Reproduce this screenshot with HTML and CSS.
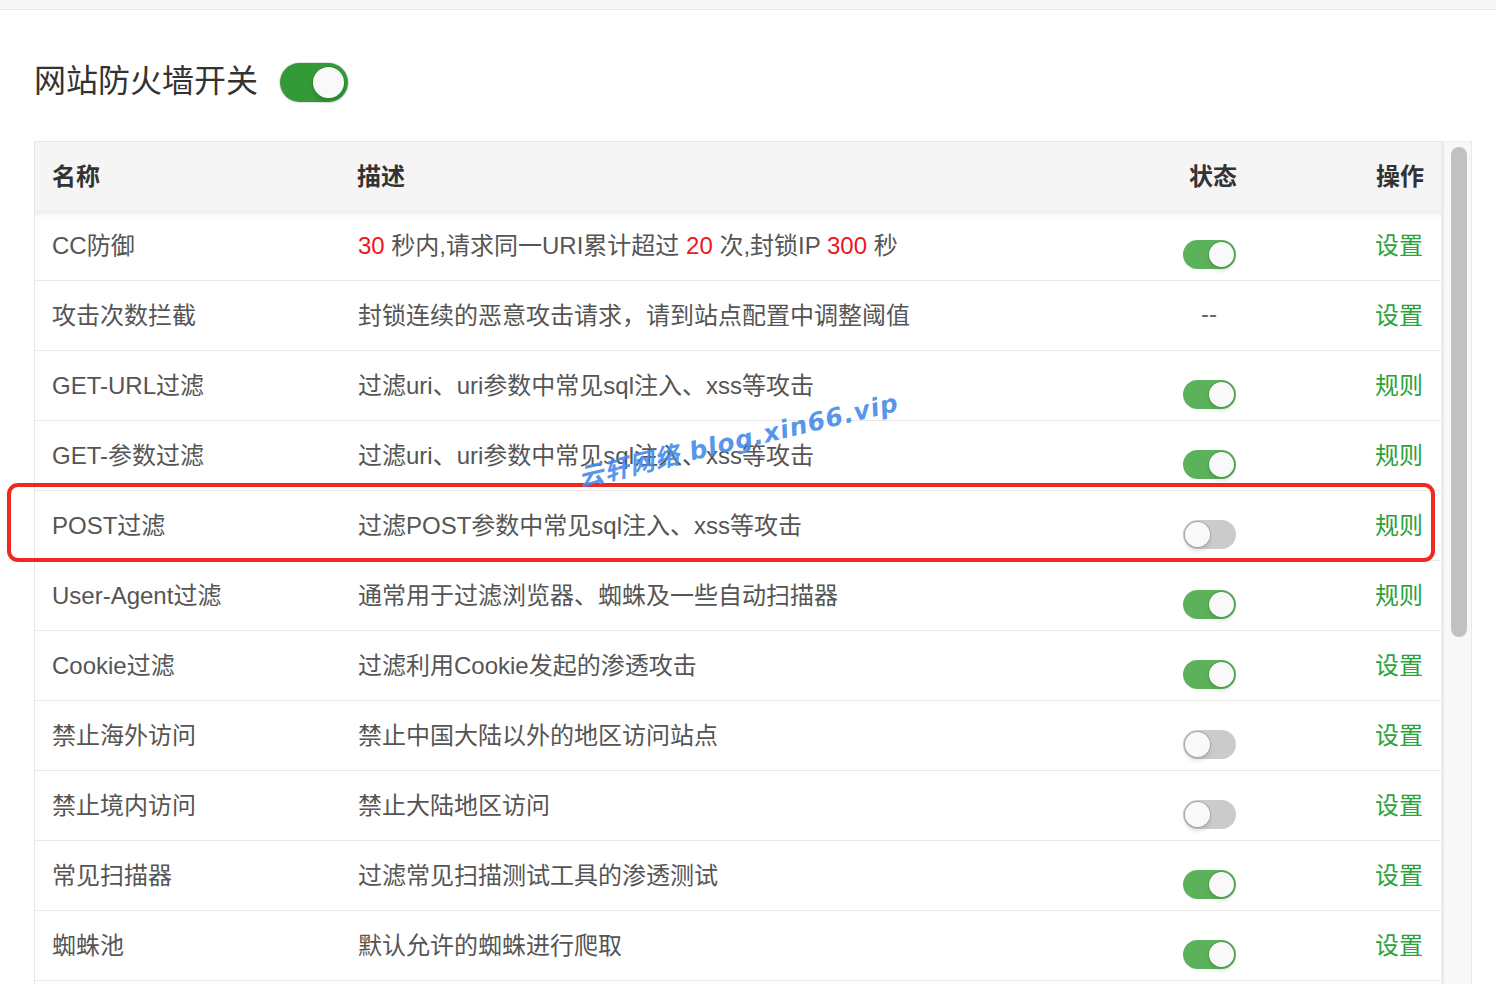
FILE: index.html
```html
<!DOCTYPE html>
<html lang="zh-CN">
<head>
  <meta charset="UTF-8" />
  <meta name="viewport" content="width=device-width, initial-scale=1.0"/>
  <title>网站防火墙</title>
  <link rel="stylesheet" href="styles.css">
</head>
<body>

  <div class="topbar"></div>

  <main class="panel">
    <div class="switch-line">
      <h2>网站防火墙开关</h2>
      <span class="switch big on"></span>
    </div>

    <div class="table-box">
      <div class="table-scroll">
        <table>
          <colgroup>
            <col class="col-name">
            <col class="col-desc">
            <col class="col-state">
            <col>
          </colgroup>
          <thead>
            <tr>
              <th>名称</th>
              <th>描述</th>
              <th class="state">状态</th>
              <th class="op">操作</th>
            </tr>
          </thead>
          <tbody>
            <tr>
              <td>CC防御</td>
              <td><span class="num">30</span> 秒内,请求同一URI累计超过 <span class="num">20</span> 次,封锁IP <span class="num">300</span> 秒</td>
              <td class="state"><span class="switch on"></span></td>
              <td class="op"><a href="#">设置</a></td>
            </tr>
            <tr>
              <td>攻击次数拦截</td>
              <td>封锁连续的恶意攻击请求，请到站点配置中调整阈值</td>
              <td class="state">--</td>
              <td class="op"><a href="#">设置</a></td>
            </tr>
            <tr>
              <td>GET-URL过滤</td>
              <td>过滤uri、uri参数中常见sql注入、xss等攻击</td>
              <td class="state"><span class="switch on"></span></td>
              <td class="op"><a href="#">规则</a></td>
            </tr>
            <tr>
              <td>GET-参数过滤</td>
              <td>过滤uri、uri参数中常见sql注入、xss等攻击</td>
              <td class="state"><span class="switch on"></span></td>
              <td class="op"><a href="#">规则</a></td>
            </tr>
            <tr>
              <td>POST过滤</td>
              <td>过滤POST参数中常见sql注入、xss等攻击</td>
              <td class="state"><span class="switch"></span></td>
              <td class="op"><a href="#">规则</a></td>
            </tr>
            <tr>
              <td>User-Agent过滤</td>
              <td>通常用于过滤浏览器、蜘蛛及一些自动扫描器</td>
              <td class="state"><span class="switch on"></span></td>
              <td class="op"><a href="#">规则</a></td>
            </tr>
            <tr>
              <td>Cookie过滤</td>
              <td>过滤利用Cookie发起的渗透攻击</td>
              <td class="state"><span class="switch on"></span></td>
              <td class="op"><a href="#">设置</a></td>
            </tr>
            <tr>
              <td>禁止海外访问</td>
              <td>禁止中国大陆以外的地区访问站点</td>
              <td class="state"><span class="switch"></span></td>
              <td class="op"><a href="#">设置</a></td>
            </tr>
            <tr>
              <td>禁止境内访问</td>
              <td>禁止大陆地区访问</td>
              <td class="state"><span class="switch"></span></td>
              <td class="op"><a href="#">设置</a></td>
            </tr>
            <tr>
              <td>常见扫描器</td>
              <td>过滤常见扫描测试工具的渗透测试</td>
              <td class="state"><span class="switch on"></span></td>
              <td class="op"><a href="#">设置</a></td>
            </tr>
            <tr>
              <td>蜘蛛池</td>
              <td>默认允许的蜘蛛进行爬取</td>
              <td class="state"><span class="switch on"></span></td>
              <td class="op"><a href="#">设置</a></td>
            </tr>
          </tbody>
        </table>
      </div>
      <div class="scrollbar"><div class="thumb"></div></div>
    </div>

    <!-- highlight around the POST row -->
    <div class="mark-box"></div>
    <div class="watermark">云轩网络 blog.xin66.vip</div>
  </main>

</body>
</html>
```

FILE: styles.css
```css
html, body {
  height: 100%;
}

body {
  margin: 0;
  overflow: hidden;
  font-family: "Liberation Sans", "Noto Sans CJK SC", sans-serif;
  background: #fff;
  color: #555;
  display: flex;
  flex-direction: column;
}

.topbar {
  height: 9px;
  background: #f6f6f6;
  border-bottom: 1px solid #e8e8e8;
}

.panel {
  flex: 1;
  display: flex;
  flex-direction: column;
  padding: 52px 24px 0 34px;
  min-height: 0;
}

.switch-line {
  display: flex;
  align-items: center;
  gap: 22px;
  height: 41px;
  margin-bottom: 38px;
}

.switch-line h2 {
  margin: 0 0 2px;
  font-size: 32px;
  font-weight: normal;
  color: #333;
  line-height: 41px;
}

/* toggle switches */
.switch {
  position: relative;
  display: block;
  width: 53px;
  height: 29px;
  border-radius: 15px;
  background: #cbcbcb;
  margin: 21px auto 0;
}

.switch::after {
  content: "";
  position: absolute;
  top: 2px;
  left: 2px;
  width: 25px;
  height: 25px;
  border-radius: 50%;
  background: #f9f9f9;
  box-shadow: 0 0 0 1px #a9a9a9, 0 4px 4px rgba(0, 0, 0, 0.12);
}

.switch.on {
  background: #5cb25a;
}

.switch.on::after {
  left: auto;
  right: 2px;
  box-shadow: 0 0 0 1px #4a9d49, 0 4px 4px rgba(0, 0, 0, 0.12);
}

.switch.big {
  width: 68px;
  height: 39px;
  border-radius: 20px;
  margin: 0;
  background: #349a38;
  box-shadow: 0 0 0 1px #e2e2e2;
}

.switch.big::after {
  top: 4px;
  right: 4px;
  width: 31px;
  height: 31px;
  box-shadow: 0 0 0 1px #2c8a31, 0 4px 4px rgba(0, 0, 0, 0.15);
}

/* table with its scroll track */
.table-box {
  flex: 1;
  display: flex;
  min-height: 0;
}

.table-scroll {
  flex: 1;
  overflow: hidden;
  border-top: 1px solid #e6e6e6;
  border-left: 1px solid #e6e6e6;
  border-right: 2px solid #ececec;
}

table {
  width: 100%;
  border-collapse: collapse;
  table-layout: fixed;
  font-size: 24px;
}

.col-name { width: 305px; }
.col-desc { width: 820px; }
.col-state { width: 98px; }

th {
  height: 65px;
  padding: 0 18px 4px 17px;
  text-align: left;
  font-weight: bold;
  color: #333;
  background: #f5f5f5;
}

td {
  height: 65px;
  padding: 0 18px 4px;
  border-bottom: 1px solid #e8e8e8;
  white-space: nowrap;
}

/* soft shadow under the header */
tbody tr:first-child td {
  background: linear-gradient(rgba(0, 0, 0, 0.07), rgba(0, 0, 0, 0) 7px);
}

td:first-child {
  padding-left: 17px;
}

th.state {
  text-align: center;
  padding: 0 0 4px 8px;
}

td.state {
  text-align: center;
  padding: 0 0 4px;
  color: #666;
}

th.op {
  text-align: right;
  padding-right: 17px;
}

td.op {
  text-align: right;
  padding-right: 18px;
}

.op a {
  color: #2ba23a;
  text-decoration: none;
}

.num {
  color: #f0141e;
}

.scrollbar {
  width: 27px;
  background: #f8f8f8;
  border-left: 1px solid #e9e9e9;
  border-right: 1px solid #e9e9e9;
  border-top: 1px solid #eeeeee;
}

.thumb {
  width: 16px;
  height: 490px;
  margin: 5px 0 0 7px;
  border-radius: 8px;
  background: #c1c1c1;
}

/* overlays */
.mark-box {
  position: absolute;
  left: 7px;
  top: 483px;
  width: 1420px;
  height: 71px;
  border: 4px solid #ee2a20;
  border-radius: 11px;
}

.watermark {
  position: absolute;
  left: 738px;
  top: 438px;
  transform: translate(-50%, -50%) rotate(-13.5deg);
  font-family: "DejaVu Sans", "Noto Sans CJK SC", sans-serif;
  font-size: 25px;
  font-weight: bold;
  font-style: italic;
  letter-spacing: 1px;
  color: rgba(70, 140, 232, 0.92);
  white-space: nowrap;
}
```
